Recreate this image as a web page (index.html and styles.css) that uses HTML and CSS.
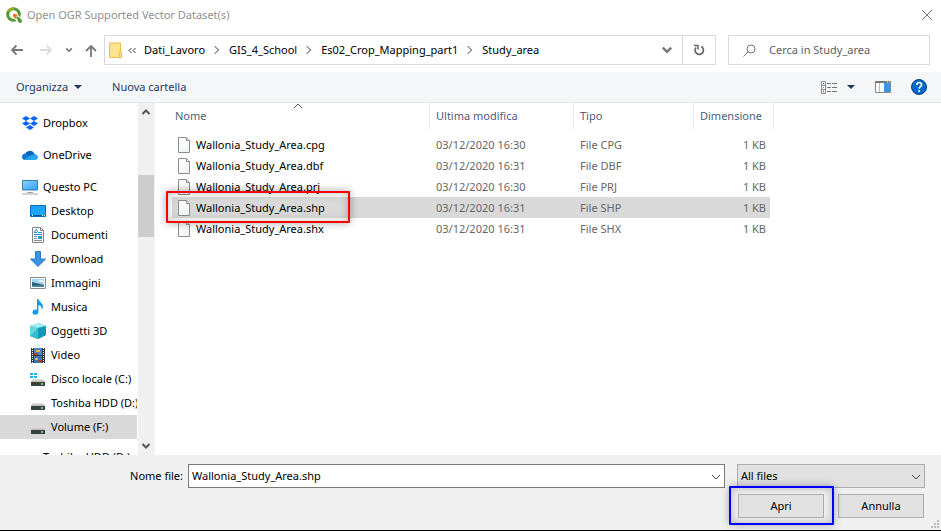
FILE: index.html
```html
<!DOCTYPE html>
<html lang="it">
<head>
<meta charset="utf-8">
<title>Open OGR Supported Vector Dataset(s)</title>
<link rel="stylesheet" href="styles.css">
</head>
<body>
<svg width="0" height="0" class="defs" aria-hidden="true">
  <defs>
    <linearGradient id="screen" x1="0" y1="0" x2="1" y2="1"><stop offset="0" stop-color="#8fd4ff"/><stop offset="1" stop-color="#2aa0f5"/></linearGradient>
    <linearGradient id="disk" x1="0" y1="0" x2="0" y2="1"><stop offset="0" stop-color="#e4e4e6"/><stop offset="1" stop-color="#b4b5b8"/></linearGradient>
    <linearGradient id="paper" x1="0" y1="0" x2="1" y2="1"><stop offset="0" stop-color="#fff"/><stop offset="1" stop-color="#f1f3f4"/></linearGradient>
    <symbol id="file" viewBox="0 0 13 16"><path d="M.5.5h8l3 3v12H.5z" fill="url(#paper)" stroke="#8c8c8c"/><path d="M8.500.5v3h3" fill="#e8e8e8" stroke="#8c8c8c"/></symbol>
    <symbol id="drive" viewBox="0 0 16 16"><path d="M3 8h10l2 3H1z" fill="url(#disk)"/><path d="M1 11h14v4H1z" fill="#3c3e40"/><path d="M11 12h2v2h-2z" fill="#4be064"/></symbol>
    <symbol id="chev" viewBox="0 0 10 10"><path d="M1 3l4 4 4-4" fill="none" stroke="currentColor"/></symbol>
    <symbol id="boldchev" viewBox="0 0 10 10"><path d="M1.500 3l3.500 3.500L8.500 3" fill="none" stroke="currentColor" stroke-width="2"/></symbol>
  </defs>
</svg>

<header class="titlebar">
  <svg width="16" height="16" viewBox="0 0 16 16"><circle cx="7.500" cy="7.500" r="5.800" fill="none" stroke="#589632" stroke-width="3"/><path d="M2.500 4.500A5.800 5.800 0 0 1 8 1.700" fill="none" stroke="#93b023" stroke-width="2.500"/><path d="M7 6.500h3.500L16 12v4h-3.500L7 10.500z" fill="#fff"/><path d="M10 10h3l2.800 3v2.800h-3z" fill="#589632"/><path d="M7 7h3l2.500 2.500H10V12L7 9.500z" fill="#ee7913"/></svg>
  <h1>Open OGR Supported Vector Dataset(s)</h1>
  <button class="plain" aria-label="Chiudi"><svg width="12" height="12" viewBox="0 0 12 12"><path d="M1 1l10 10M11 1L1 11" stroke="#777"/></svg></button>
</header>

<nav class="navbar">
  <div class="history">
    <button class="plain" aria-label="Indietro"><svg width="14" height="12" viewBox="0 0 14 12"><path d="M13 6H2M6.500 1.500L2 6l4.500 4.500" fill="none" stroke="#777" stroke-width="1.800"/></svg></button>
    <button class="plain" aria-label="Avanti"><svg width="14" height="12" viewBox="0 0 14 12"><path d="M1 6h11M7.500 1.500L12 6l-4.500 4.500" fill="none" stroke="#ddd" stroke-width="1.800"/></svg></button>
    <button class="plain recent" aria-label="Percorsi recenti"><svg width="8" height="8"><use href="#boldchev"/></svg></button>
    <button class="plain" aria-label="Su"><svg width="12" height="13" viewBox="0 0 12 13"><path d="M6 13V2M1 7l5-5 5 5" fill="none" stroke="#777" stroke-width="1.800"/></svg></button>
  </div>
  <div class="address">
    <svg class="folder" width="13" height="17" viewBox="0 0 13 17"><path d="M.5 1h11v9.500h1v5H.5z" fill="#ffe391" stroke="#ecc04a"/><path d="M10.500 15V9.500h2" fill="none" stroke="#ecc04a"/></svg>
    <svg class="more" width="8" height="7" viewBox="0 0 8 7"><path d="M3.500 1L1 3.500 3.500 6M7.500 1L5 3.500 7.500 6" fill="none" stroke="#333"/></svg>
    <ol class="crumbs">
      <li><a href="#">Dati_Lavoro</a></li>
      <li><a href="#">GIS_4_School</a></li>
      <li><a href="#">Es02_Crop_Mapping_part1</a></li>
      <li><a href="#">Study_area</a></li>
    </ol>
    <button class="plain drop" aria-label="Percorsi precedenti"><svg width="12" height="12"><use href="#boldchev"/></svg></button>
    <button class="plain refresh" aria-label="Aggiorna"><svg width="12" height="12" viewBox="0 0 12 12"><path d="M8.300 2.500A4.200 4.200 0 1 1 3 3.500" fill="none" stroke="#666" stroke-width="1.700"/><path d="M1 1.500h4V5.500" fill="none" stroke="#666" stroke-width="1.500"/></svg></button>
  </div>
  <label class="search">
    <svg width="13" height="13" viewBox="0 0 13 13"><circle cx="8" cy="5" r="4" fill="none" stroke="#777"/><path d="M5 8L.5 12.500" stroke="#777"/></svg>
    <input type="search" placeholder="Cerca in Study_area" aria-label="Cerca in Study_area">
  </label>
</nav>

<div class="toolbar">
  <button class="plain organize">Organizza <span class="tri"></span></button>
  <button class="plain">Nuova cartella</button>
  <div class="tools">
    <button class="plain view" aria-label="Cambia visualizzazione"><svg width="17" height="13" viewBox="0 0 17 13"><path d="M.5.5h4v12h-4zM.5 4.500h4M.5 8.500h4" fill="#fff" stroke="#8a8a8a"/><path d="M6 2.500h4m1 0h5M6 6.500h4m1 0h5M6 10.500h4m1 0h5" stroke="#777"/><path d="M2 2h1v1H2z" fill="#333"/><path d="M2 6h1v1H2z" fill="#2f8fe0"/><path d="M2 10h1v1H2z" fill="#c22"/></svg><span class="tri"></span></button>
    <button class="plain" aria-label="Riquadro di anteprima"><svg width="16" height="12" viewBox="0 0 16 12"><path d="M.5.5h15v11H.5z" fill="#fff" stroke="#888"/><path d="M0 0h16v2H0z" fill="#777"/><path d="M4.500 2v9" stroke="#bbb"/><path d="M9 2h6v9H9z" fill="#3a96e8"/><path d="M12 1h1m1 0h1" stroke="#fff"/></svg></button>
    <button class="plain" aria-label="Guida"><svg width="16" height="16" viewBox="0 0 16 16"><circle cx="8" cy="8" r="7.500" fill="#0568cc" stroke="#08427c"/><path d="M5.800 6c0-3.300 4.800-3.200 4.800-.3C10.600 7.500 8.200 7.600 8.200 9.700" fill="none" stroke="#fff" stroke-width="1.600"/><circle cx="8.200" cy="12" r="1.100" fill="#fff"/></svg></button>
  </div>
</div>

<main class="content">
  <aside class="sidebar">
    <ul class="tree">
      <li class="root"><svg width="16" height="16" viewBox="0 0 16 16"><path d="M4 1l4 2.500L4 6 0 3.500zM12 1l4 2.500L12 6 8 3.500zM4 6l4 2.500L4 11 0 8.500zM12 6l4 2.500-4 2.500-4-2.500zM8 10l4 2.500L8 15l-4-2.500z" fill="#0b63f6"/></svg>Dropbox</li>
      <li class="root"><svg width="16" height="16" viewBox="0 0 16 16"><path d="M3 8a5 5 0 0 1 9-2l2 3-4 3-7-3z" fill="#0864b8"/><path d="M3.500 6.500C1 6.500 0 8.300 0 10c0 2 1.400 3 3 3h5l3-6-4 1z" fill="#1279d0"/><path d="M2 12.700L9 8.500c5-3 7 0 7 2 0 1.600-1.200 2.500-3 2.500H3z" fill="#29a5ed"/></svg>OneDrive</li>
      <li class="root"><svg width="16" height="16" viewBox="0 0 16 16"><path d="M.5 1.500h15v9.500H.5z" fill="url(#screen)" stroke="#397fa8"/><path d="M5 13.500h6" stroke="#9aa5b4"/><path d="M0 15h16" stroke="#9aa5b8"/></svg>Questo PC</li>
      <li><svg width="16" height="16" viewBox="0 0 16 16"><path d="M.5 2.500h15v11H.5z" fill="#1ea4fa" stroke="#086bb8"/><path d="M1 12.500h14" stroke="#0557a0"/><path d="M2 12.500h1m9 0h1m1 0h1" stroke="#fff"/></svg>Desktop</li>
      <li><svg width="16" height="16" viewBox="0 0 16 16"><path d="M2.500.5h8l3 3v12h-11z" fill="#fff" stroke="#858585"/><path d="M10.500.5v3h3" fill="none" stroke="#858585"/><path d="M4 5.500h3m1 0h4M4 7.500h8" stroke="#2a8bc9"/><path d="M4 9.500h3M4 11.500h3M4 13.500h8" stroke="#888"/><path d="M8 9h4v3H8z" fill="#2494dc"/><path d="M4.500 5l2-3 1 3" fill="none" stroke="#2494dc"/></svg>Documenti</li>
      <li><svg width="16" height="16" viewBox="0 0 16 16"><path d="M5.500.5h5V8h5L8 15.500.5 8h5z" fill="#3995e4" stroke="#2b79c4"/></svg>Download</li>
      <li><svg width="16" height="16" viewBox="0 0 16 16"><path d="M.5 2.500h15v11H.5z" fill="#fff" stroke="#8b8b8b"/><path d="M2 4h12v8H2z" fill="#a5d5f6"/><path d="M2 7l4 1 8 2v2H2z" fill="#315e68"/><path d="M2 10.500h12V12H2z" fill="#438dbb"/><path d="M7 6l4-1 3 1v1z" fill="#fff"/></svg>Immagini</li>
      <li><svg width="16" height="16" viewBox="0 0 16 16"><path d="M7 0h1.500c.5 3 4.500 4 4.500 7.500 0 1.500-1 3-1.500 3.500.7-3-.5-4.500-3-5V12c0 5-6 4.500-6 1.500C2.500 11 5 10 7 11z" fill="#119bf0"/></svg>Musica</li>
      <li><svg width="16" height="16" viewBox="0 0 16 16"><path d="M0 3l9-3 7 3v9l-8 4-8-3z" fill="#24b4cb"/><path d="M0 3l8 2v11l-8-3z" fill="#62d4e2"/><path d="M0 3l9-3 7 3-8 2z" fill="#a5ebf2"/><path d="M8 5l8-2v9l-8 4z" fill="#1298b0"/><path d="M0 13l8-8v11z" fill="#36bcd0"/></svg>Oggetti 3D</li>
      <li><svg width="16" height="16" viewBox="0 0 16 16"><path d="M1 1h14v15H1z" fill="#38363a"/><path d="M4 1h8v7H4z" fill="#4b87c8"/><path d="M4 9h8v7H4z" fill="#3e73bb"/><path d="M2.500 1v15M13.500 1v15" stroke="#eee" stroke-dasharray="1 1"/><path d="M6 3h4v2H6zM5 11h3v2H5z" fill="#f2b632"/><path d="M4 6h4v2H4zM8 13h4v2H8z" fill="#a7432d"/></svg>Video</li>
      <li><svg width="16" height="16" viewBox="0 0 16 16"><use href="#drive"/><path d="M0 2h3v2H0zM4 2h3v2H4zM0 5h3v2H0zM4 5h3v2H4z" fill="#18b3ea"/></svg>Disco locale (C:)</li>
      <li><svg width="16" height="16"><use href="#drive"/></svg>Toshiba HDD (D:)</li>
      <li class="current"><svg width="16" height="16"><use href="#drive"/></svg>Volume (F:)</li>
      <li class="root last"><svg width="16" height="16"><use href="#drive"/></svg>Toshiba HDD (D:)</li>
    </ul>
    <div class="scrollbar">
      <svg width="10" height="10" class="up"><use href="#boldchev"/></svg>
      <div class="thumb"></div>
      <svg width="10" height="10"><use href="#boldchev"/></svg>
    </div>
  </aside>
  <section class="files">
    <table>
      <colgroup><col class="c-name"><col class="c-date"><col class="c-type"><col class="c-size"></colgroup>
      <thead><tr><th class="sorted">Nome<svg width="10" height="10" class="sort"><use href="#chev"/></svg></th><th>Ultima modifica</th><th>Tipo</th><th>Dimensione</th></tr></thead>
      <tbody>
        <tr><td><span class="name"><svg width="13" height="16"><use href="#file"/></svg>Wallonia_Study_Area.cpg</span></td><td>03/12/2020 16:30</td><td>File CPG</td><td>1 KB</td></tr>
        <tr><td><span class="name"><svg width="13" height="16"><use href="#file"/></svg>Wallonia_Study_Area.dbf</span></td><td>03/12/2020 16:31</td><td>File DBF</td><td>1 KB</td></tr>
        <tr><td><span class="name"><svg width="13" height="16"><use href="#file"/></svg>Wallonia_Study_Area.prj</span></td><td>03/12/2020 16:30</td><td>File PRJ</td><td>1 KB</td></tr>
        <tr class="selected"><td><span class="name"><svg width="13" height="16"><use href="#file"/></svg>Wallonia_Study_Area.shp</span></td><td>03/12/2020 16:31</td><td>File SHP</td><td>1 KB</td></tr>
        <tr><td><span class="name"><svg width="13" height="16"><use href="#file"/></svg>Wallonia_Study_Area.shx</span></td><td>03/12/2020 16:31</td><td>File SHX</td><td>1 KB</td></tr>
      </tbody>
    </table>
  </section>
</main>

<footer class="footer">
  <div class="row">
    <label class="caption" for="filename">Nome file:</label>
    <div class="combo name-combo"><input id="filename" type="text" value="Wallonia_Study_Area.shp"><svg width="10" height="10"><use href="#chev"/></svg></div>
    <div class="combo type-combo"><select aria-label="Tipo di file"><option>All files</option></select><svg width="10" height="10"><use href="#chev"/></svg></div>
  </div>
  <div class="actions">
    <div class="marked"><button>Apri</button></div>
    <button>Annulla</button>
  </div>
  <svg class="grip" width="8" height="8" viewBox="0 0 8 8"><path d="M6 0h2v2H6zM3 3h2v2H3zM6 3h2v2H6zM0 6h2v2H0zM3 6h2v2H3zM6 6h2v2H6z" fill="#bbb"/></svg>
</footer>
</body>
</html>
```

FILE: styles.css
```css
* { box-sizing: border-box; }
body {
  margin: 0;
  height: 100vh;
  display: flex;
  flex-direction: column;
  overflow: hidden;
  border-bottom: 1px solid #000;
  background: #fff;
  color: #000;
  font: 11px/16px "Noto Sans", "Open Sans", sans-serif;
}
svg { display: block; flex: none; }
.defs { position: absolute; }
button, input, select { font: inherit; color: inherit; }
.plain {
  display: flex;
  align-items: center;
  padding: 0;
  border: 0;
  background: none;
}

.titlebar {
  display: flex;
  align-items: center;
  gap: 5px;
  height: 29px;
  padding: 0 8px 0 6px;
}
.titlebar h1 { flex: 1; margin: 0; font-size: 11px; font-weight: 400; color: #909090; }

.navbar {
  display: flex;
  height: 43px;
  padding: 6px 11px 7px 10px;
}
.history { display: flex; align-items: center; gap: 15px; width: 94px; }
.recent { color: #777; margin: 0 -3px 0 -3px; }
.address {
  flex: 1;
  display: flex;
  align-items: center;
  border: 1px solid #d9d9d9;
}
.folder { margin: 0 6px 0 4px; }
.crumbs {
  flex: 1;
  display: flex;
  margin: 0;
  padding: 0 0 0 8px;
  list-style: none;
}
.crumbs li { display: flex; align-items: center; }
.crumbs li + li::before {
  content: "";
  width: 5px;
  height: 5px;
  margin: 0 11px 0 7px;
  border: solid #777;
  border-width: 1px 1px 0 0;
  transform: rotate(45deg);
}
.crumbs a { color: #000; text-decoration: none; }
.drop { margin-right: 9px; color: #777; }
.refresh {
  align-self: stretch;
  justify-content: center;
  width: 33px;
  border-left: 1px solid #d9d9d9;
}
.search {
  display: flex;
  align-items: center;
  gap: 13px;
  width: 202px;
  margin-left: 12px;
  padding: 0 14px;
  border: 1px solid #d9d9d9;
}
.search input {
  flex: 1;
  min-width: 0;
  padding: 0;
  border: 0;
  outline: 0;
  background: none;
}
.search input::placeholder { color: #606060; opacity: 1; }

.toolbar {
  display: flex;
  align-items: center;
  gap: 30px;
  height: 31px;
  padding: 0 14px 0 16px;
  border-bottom: 1px solid #e5e7e9;
  background: #f4f6f8;
  color: #1e395b;
}
.organize { gap: 6px; }
.view { gap: 9px; }
.tri {
  border: solid transparent;
  border-width: 4px 4px 0;
  border-top-color: #1e395b;
}
.tools { display: flex; align-items: center; gap: 20px; margin-left: auto; }

.content { flex: 1; display: flex; min-height: 0; }
.sidebar { display: flex; width: 155px; border-right: 1px solid #f3f3f3; }
.tree {
  flex: 1;
  min-width: 0;
  margin: 0;
  padding: 8px 1px 0 0;
  overflow: hidden;
  list-style: none;
}
.tree li {
  display: flex;
  align-items: center;
  gap: 5px;
  height: 24px;
  padding-left: 30px;
  overflow: hidden;
  white-space: nowrap;
}
.tree .root { padding-left: 22px; }
.tree .root + .root { margin-top: 8px; }
.tree .last { margin-top: 6px; }
.tree .current { background: #d9d9d9; }
.scrollbar {
  display: flex;
  flex-direction: column;
  align-items: center;
  width: 16px;
  padding: 4px 0;
  background: #f0f0f0;
  color: #555;
}
.scrollbar svg:last-child { margin-top: auto; }
.up { transform: scaleY(-1); }
.thumb { width: 16px; height: 62px; margin-top: 58px; background: #cdcdcd; }

.files { flex: 1; min-width: 0; padding-left: 17px; }
table { width: 602px; table-layout: fixed; border-spacing: 0; }
.c-name { width: 258px; }
.c-date { width: 144px; }
.c-type { width: 120px; }
.c-size { width: 80px; }
th {
  height: 26px;
  padding: 0 6px;
  border-right: 1px solid #e5e5e5;
  color: #4c607a;
  font-weight: 400;
  text-align: left;
}
.sorted { position: relative; padding-left: 3px; }
.sort { position: absolute; top: -2px; left: 47%; color: #555; transform: scaleY(-1); }
tbody::before { content: ""; display: table-row; height: 5px; }
td { height: 21px; padding: 0 6px; color: #666; }
td:first-child { color: #000; }
td:last-child {
  padding-right: 4px;
  border-right: 4px solid transparent;
  background-clip: padding-box;
  text-align: right;
}
.name { display: flex; align-items: center; gap: 5px; }
.selected td { background-color: #d9d9d9; }
.selected td:first-child { position: relative; }
.selected td:first-child::after {
  content: "";
  position: absolute;
  inset: -6px 80px -5px -6px;
  border: 2px solid #f00;
  border-radius: 1px;
  box-shadow: 0 0 9px rgba(0, 0, 0, .35), inset 0 0 9px rgba(0, 0, 0, .25);
}

.footer {
  position: relative;
  padding: 9px 16px 5px;
  background: #f0f0f0;
}
.row { display: flex; }
.caption { width: 172px; padding: 4px 5px 0 0; text-align: right; }
.combo { display: flex; position: relative; height: 24px; border: 1px solid #7a7a7a; background: #fff; }
.combo input, .combo select {
  flex: 1;
  min-width: 0;
  padding: 0 20px 0 3px;
  border: 0;
  outline: 0;
  appearance: none;
  background: none;
}
.combo svg { position: absolute; right: 3px; top: 7px; color: #444; pointer-events: none; }
.name-combo { flex: 1; }
.type-combo { width: 188px; margin-left: 12px; border-color: #adadad; background: #e1e1e1; }
.actions { display: flex; justify-content: flex-end; align-items: center; gap: 4px; margin-top: -2px; padding-right: 1px; }
.actions button {
  width: 86px;
  height: 24px;
  padding: 0;
  border: 1px solid #adadad;
  background: #e1e1e1;
}
.marked {
  position: relative;
  padding: 6px 8px 5px 7px;
  border: 2px solid #00f;
  border-radius: 1px;
  box-shadow: 0 0 9px rgba(0, 0, 0, .3), inset 0 0 9px rgba(0, 0, 0, .25);
}
.grip { position: absolute; right: 2px; bottom: 2px; }
```
